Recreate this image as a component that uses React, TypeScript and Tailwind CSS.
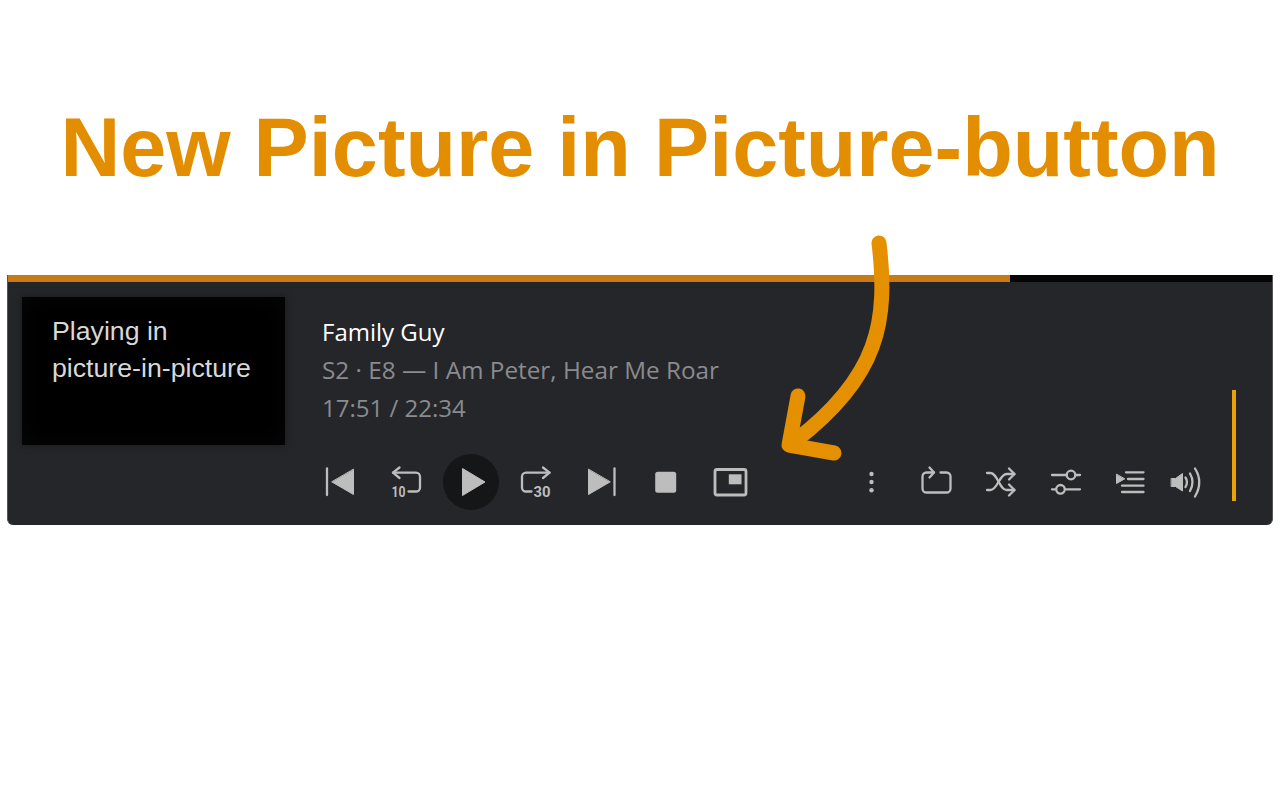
const C = "#bdbdbd";

function Icon({ x, w = 64, children }: { x: number; w?: number; children: React.ReactNode }) {
  return (
    <svg viewBox={`${x} 454 ${w} 56`} width={w} height={56} fill="none" stroke={C} strokeWidth={2.3} strokeLinecap="round" strokeLinejoin="round" className="shrink-0 block">
      {children}
    </svg>
  );
}

function Btn({ children, w = "w-[65px]" }: { children: React.ReactNode; w?: string }) {
  return <div className={`${w} h-[56px] flex items-center justify-center shrink-0`}>{children}</div>;
}

const numStyle = { fontFamily: '"Roboto", sans-serif', fontWeight: 700, fontSize: 15 };

export default function App() {
  return (
    <div className="relative w-[1280px] h-[800px] bg-white overflow-hidden font-['Liberation_Sans',sans-serif]">
      <div className="h-[275px] flex justify-center pt-[98px]">
        <h1 className="text-[82.8px] leading-[100px] font-bold text-[#e28e00] whitespace-nowrap">New Picture in Picture-button</h1>
      </div>

      <div className="mx-[7px] h-[250px] bg-[#24262a] border-x border-[#55565a] rounded-b-[6px] overflow-hidden">
        <div className="flex h-[7px]">
          <div className="w-[1002px] bg-[#c97a17]"></div>
          <div className="flex-1 bg-[#060606]"></div>
        </div>
        <div className="flex">
          <div className="ml-[14px] mt-[15px] w-[263px] h-[148px] bg-black shrink-0 pt-[16px] pl-[30px] text-[26.7px] leading-[37px] text-[#d8d8d8] shadow-[0_0_8px_rgba(0,0,0,0.35),inset_0_0_24px_rgba(38,39,43,0.18)] whitespace-nowrap">
            <div>Playing in</div>
            <div>picture-in-picture</div>
          </div>
          <div className="ml-[23px] flex-1 pt-[31px]">
            <div className="pl-[14px] font-['Open_Sans',sans-serif] text-[24px] leading-[38px] whitespace-nowrap">
              <div className="text-white">Family Guy</div>
              <div className="text-[#8a8b8d] text-[24.3px]">S2 · E8 — I Am Peter, Hear Me Roar</div>
              <div className="text-[#8a8b8d]">17:51 / 22:34</div>
            </div>
            <div className="mt-[27px] flex justify-between">
              <div className="flex">
                <Btn>
                  <Icon x={308.5}>
                    <path d="M326.5 468.5V495" />
                    <path d="M353 469.5V494.5L331.5 482Z" fill={C} strokeWidth={1} />
                  </Icon>
                </Btn>
                <Btn>
                  <Icon x={373.5}>
                    <path d="M392.5 472.7H415.5a4 4 0 0 1 4 4V487.5a4 4 0 0 1-4 4H408" />
                    <path d="M399 467.5L392.5 472.7L399 478" />
                    <text x={391} y={497} textLength={14} lengthAdjust="spacingAndGlyphs" fill={C} stroke="none" style={numStyle}>10</text>
                  </Icon>
                </Btn>
                <div className="w-[65px] h-[56px] flex justify-center shrink-0">
                  <div className="w-[56px] h-[56px] rounded-full bg-[#151617] flex items-center justify-center">
                    <svg viewBox="0 0 56 56" width={56} height={56} className="block">
                      <path d="M19.5 14.5V41.5L42 28Z" fill={C} stroke={C} strokeWidth={1} strokeLinejoin="round" />
                    </svg>
                  </div>
                </div>
                <Btn>
                  <Icon x={503.5}>
                    <path d="M549 472.7H525.5a4 4 0 0 0-4 4V487.5a4 4 0 0 0 4 4H531" />
                    <path d="M542.5 467.5L549 472.7L542.5 478" />
                    <text x={533} y={497} textLength={17} lengthAdjust="spacingAndGlyphs" fill={C} stroke="none" style={numStyle}>30</text>
                  </Icon>
                </Btn>
                <Btn>
                  <Icon x={568.5}>
                    <path d="M588 469.5V494.5L609.5 482Z" fill={C} strokeWidth={1} />
                    <path d="M614 468.5V495" />
                  </Icon>
                </Btn>
                <Btn>
                  <Icon x={633.5}>
                    <rect x={654.7} y={471.7} width={21} height={21} rx={2.5} fill={C} stroke="none" />
                  </Icon>
                </Btn>
                <Btn>
                  <Icon x={698.5}>
                    <rect x={714.5} y={469.5} width={31} height={25.5} rx={2} strokeWidth={2.8} />
                    <rect x={728.3} y={474.3} width={12.7} height={10} fill={C} stroke="none" />
                  </Icon>
                </Btn>
              </div>
              <div className="flex mr-[23px]">
                <Btn>
                  <Icon x={838.5}>
                    <circle cx={871} cy={474} r={2.2} fill={C} stroke="none" />
                    <circle cx={871} cy={482} r={2.2} fill={C} stroke="none" />
                    <circle cx={871} cy={490.3} r={2.2} fill={C} stroke="none" />
                  </Icon>
                </Btn>
                <Btn>
                  <Icon x={903.5}>
                    <path d="M940 472.5H946a4 4 0 0 1 4 4V488.5a4 4 0 0 1-4 4H926a4 4 0 0 1-4-4V476.5a4 4 0 0 1 4-4H933.5" />
                    <path d="M929 467.5L933.5 472.5L929 477.5" />
                  </Icon>
                </Btn>
                <Btn>
                  <Icon x={968.5}>
                    <path d="M986.5 473H990C997 473 999 490 1006 490H1014" />
                    <path d="M986.5 490H990C997 490 999 474 1006 474H1014" />
                    <path d="M1008.5 468.5L1014 474L1008.5 479.5" />
                    <path d="M1008.5 484.5L1014 490L1008.5 495.5" />
                  </Icon>
                </Btn>
                <Btn>
                  <Icon x={1033.5}>
                    <path d="M1051.5 475H1066M1075 475H1079.5" />
                    <circle cx={1070.5} cy={475} r={4.3} />
                    <path d="M1051.5 489.3H1055.5M1064.5 489.3H1079.5" />
                    <circle cx={1060} cy={489.3} r={4.3} />
                  </Icon>
                </Btn>
                <Btn>
                  <Icon x={1098.5}>
                    <path d="M1116 474.5V483.5L1124 479Z" fill={C} strokeWidth={1} />
                    <path d="M1125.5 472.3H1143M1127.5 479H1143M1121.5 485.7H1143M1121.5 492H1143" />
                  </Icon>
                </Btn>
                <Btn w="w-[46px]">
                  <Icon x={1163} w={46}>
                    <path d="M1171.5 478.5H1175.5L1182.5 473.5V491L1175.5 486.5H1171.5Z" fill={C} strokeWidth={1} />
                    <path d="M1185.5 477.5Q1188.5 482 1185.5 487" />
                    <path d="M1190 473.5Q1195 482 1190 491" />
                    <path d="M1195 468.5Q1203.5 482 1195 496.5" />
                  </Icon>
                </Btn>
              </div>
            </div>
          </div>
          <div className="shrink-0 mt-[108px] mr-[36px] w-[4px] h-[111px] bg-[#e8a20c]"></div>
        </div>
      </div>

      <svg viewBox="0 0 1280 800" width={1280} height={800} fill="none" stroke="#e59000" strokeLinecap="round" strokeLinejoin="round" className="absolute top-0 left-0 pointer-events-none">
        <path d="M879 243C888 320 880 376 795 441" strokeWidth={15} />
        <path d="M798 396L789 445L834 453" strokeWidth={15} />
      </svg>
    </div>
  );
}
